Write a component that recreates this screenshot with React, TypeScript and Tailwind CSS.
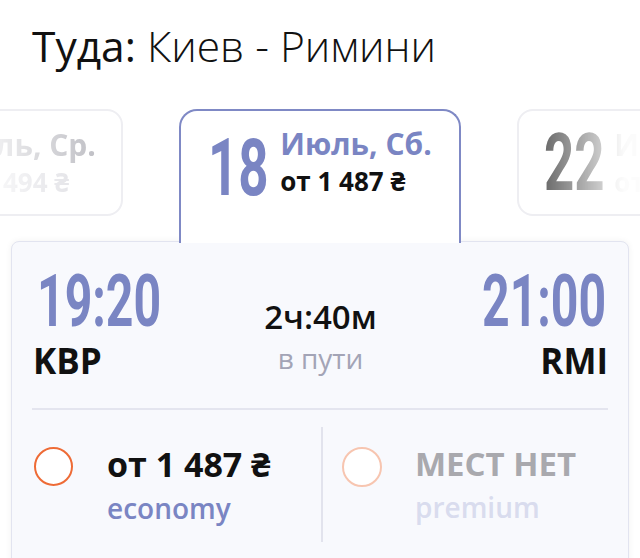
import React from "react";

const OPEN = "font-['Open_Sans','Noto_Sans',sans-serif]";

function Cond({ text, size, width, className = "" }: { text: string; size: number; width: number; className?: string }) {
  return (
    <span className="relative block shrink-0 leading-none" style={{ width, height: size }}>
      <span
        className={`absolute left-0 top-0 whitespace-nowrap font-bold leading-none origin-left scale-x-[0.66] font-['Roboto',sans-serif] ${className}`}
        style={{ fontSize: size }}
      >
        {text}
      </span>
    </span>
  );
}

export default function App() {
  return (
    <div className={`relative w-[640px] h-[558px] overflow-hidden bg-white ${OPEN}`}>
      <h1 className="pl-[32px] pt-[25px] text-[42.5px] leading-none text-[#111] h-[109px]">
        <span className="font-normal">Туда:</span>
        <span className="font-light"> Киев - Римини</span>
      </h1>

      {/* date cards */}
      <div className="relative z-10 flex items-start gap-[56px] ml-[-159px] h-[133px]">
        {/* left faded card */}
        <div className="w-[282px] h-[107px] shrink-0 rounded-[16px] border-2 border-[#eeeef2] bg-white flex items-center justify-center">
          <div className="flex items-center gap-[12px] [mask-image:linear-gradient(to_left,rgba(0,0,0,0.95)_0px,rgba(0,0,0,0.55)_60px,rgba(0,0,0,0.15)_110px,transparent_150px)]">
            <Cond text="15" size={80} width={60} className="text-[#9a9aa0]" />
            <div className="flex flex-col pl-[4px]">
              <span className="text-[30px] font-bold leading-none text-[#bdbdc3]">Июль, Ср.</span>
              <span className="mt-[9px] text-[26px] font-bold leading-none text-[#dedee3]">от 1 494 ₴</span>
            </div>
          </div>
        </div>

        {/* selected card */}
        <div className="w-[282px] h-[134px] shrink-0 rounded-t-[18px] border-2 border-b-0 border-[#7f89c5] bg-white flex justify-center pt-[17px]">
          <div className="flex items-start gap-[12px] h-[64px]">
            <Cond text="18" size={80} width={60} className="text-[#7a85c3]" />
            <div className="flex flex-col pt-[1px]">
              <span className="text-[30px] font-bold leading-none text-[#7a85c3]">Июль, Сб.</span>
              <span className="mt-[9px] text-[26px] font-bold leading-none text-[#111]">от 1 487 ₴</span>
            </div>
          </div>
        </div>

        {/* right faded card */}
        <div className="w-[282px] h-[107px] shrink-0 rounded-[16px] border-2 border-[#eeeef2] bg-white flex items-center justify-center">
          <div className="flex items-center gap-[6px] -ml-[8px] [mask-image:linear-gradient(to_right,rgba(0,0,0,0.8)_0px,rgba(0,0,0,0.25)_60px,rgba(0,0,0,0.04)_80px,transparent_140px)]">
            <Cond text="22" size={80} width={64} className="text-[#444]" />
            <div className="flex flex-col">
              <span className="text-[30px] font-bold leading-none text-[#888]">Июль, Вс.</span>
              <span className="mt-[9px] text-[26px] font-bold leading-none text-[#aaa]">от 1 520 ₴</span>
            </div>
          </div>
        </div>
      </div>

      {/* panel */}
      <div className="relative ml-[11px] w-[618px] h-[340px] -mt-[1px] rounded-[8px] border border-[#e2e4f0] bg-[#f8f9fd] px-[20px] pt-[23px] shadow-[0_0_6px_rgba(0,0,0,0.06)]">
        <div className="flex items-start justify-between">
          <div className="flex flex-col items-start pl-[5px]">
            <Cond text="19:20" size={73} width={120} className="text-[#7a85c3]" />
            <span className="mt-[5px] -ml-[4px] text-[35px] font-bold leading-none text-[#111]">KBP</span>
          </div>
          <div className="flex flex-col items-center pt-[35px] pl-[2px]">
            <span className="text-[33px] font-semibold leading-none text-[#111]">2ч:40м</span>
            <span className="mt-[11px] text-[28px] leading-none text-[#a3a4b6]">в пути</span>
          </div>
          <div className="flex flex-col items-end">
            <div className="flex pr-[4px]">
              <Cond text="21:00" size={73} width={122} className="text-[#7a85c3]" />
            </div>
            <span className="mt-[5px] text-[35px] font-bold leading-none text-[#111]">RMI</span>
          </div>
        </div>

        <div className="mt-[30px] h-[2px] bg-[#e4e5ef]" />

        <div className="flex h-[115px] mt-[17px]">
          <div className="w-[289px] shrink-0 flex items-start pt-[20px] pl-[2px]">
            <div className="w-[39px] h-[39px] rounded-full border-2 border-[#ee6b36] bg-white shrink-0" />
            <div className="ml-[34px] flex flex-col">
              <span className="text-[34px] font-bold leading-none text-[#111]">от 1 487 ₴</span>
              <span className="mt-[13px] text-[28px] font-semibold leading-none text-[#7a85c3]">economy</span>
            </div>
          </div>
          <div className="w-[2px] shrink-0 bg-[#e2e3ed]" />
          <div className="flex-1 flex items-start pt-[20px] pl-[19px]">
            <div className="w-[40px] h-[40px] rounded-full border-2 border-[#f7c5b0] bg-white shrink-0" />
            <div className="ml-[33px] flex flex-col">
              <span className="text-[33px] font-bold leading-none text-[#a9a9ae]">МЕСТ НЕТ</span>
              <span className="mt-[13px] text-[28px] font-semibold leading-none text-[#d9dcee]">premium</span>
            </div>
          </div>
        </div>
      </div>
    </div>
  );
}
